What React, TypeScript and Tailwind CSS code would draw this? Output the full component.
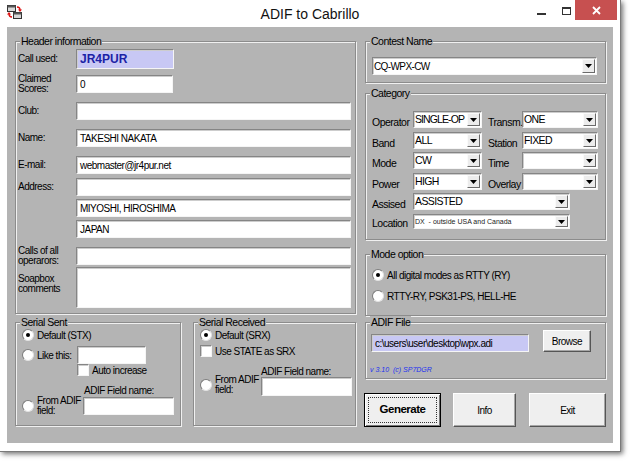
import React from "react";

const sunken =
  "border border-t-[#858585] border-l-[#858585] border-r-[#f5f5f5] border-b-[#f5f5f5] shadow-[inset_1px_1px_0_#cdcdcd]";

const raised =
  "bg-[#efefef] border border-t-white border-l-white border-r-[#555] border-b-[#555] shadow-[inset_-1px_-1px_0_#a6a6a6]";

function Input({
  className = "",
  value = "",
  bg = "bg-white",
  textClass = "",
}: {
  className?: string;
  value?: string;
  bg?: string;
  textClass?: string;
}) {
  return (
    <div className={`${sunken} ${bg} flex items-center pl-[3px] overflow-hidden whitespace-nowrap shrink-0 ${className}`}>
      <span className={textClass}>{value}</span>
    </div>
  );
}

function Select({
  className = "",
  value = "",
  textClass = "tracking-[-0.6px]",
}: {
  className?: string;
  value?: string;
  textClass?: string;
}) {
  return (
    <div className={`${sunken} bg-white flex items-stretch shrink-0 ${className}`}>
      <div className={`flex-1 flex items-center pl-[1px] overflow-hidden whitespace-pre ${textClass}`}>{value}</div>
      <div className="w-[13px] m-[1px] bg-[#ececec] border border-t-[#fafafa] border-l-[#fafafa] border-r-[#6a6a6a] border-b-[#6a6a6a] flex items-center justify-center">
        <svg width="7" height="4" viewBox="0 0 7 4">
          <path d="M0 0h7L3.5 4z" fill="#000" />
        </svg>
      </div>
    </div>
  );
}

function Radio({ checked = false }: { checked?: boolean }) {
  return (
    <div className="w-[12px] h-[12px] shrink-0 rounded-full bg-white border border-t-[#7c7c7c] border-l-[#7c7c7c] border-r-[#e2e2e2] border-b-[#e2e2e2] flex items-center justify-center">
      {checked && <div className="w-[4px] h-[4px] rounded-full bg-black" />}
    </div>
  );
}

function Check() {
  return <div className={`w-[12px] h-[12px] shrink-0 bg-white ${sunken}`} />;
}

function Group({ title, className = "", children }: { title: string; className?: string; children?: React.ReactNode }) {
  return (
    <div className={`border border-[#8c8c8c] shadow-[inset_1px_1px_0_#f0f0f0,1px_1px_0_#f0f0f0] shrink-0 ${className}`}>
      <div className="-mt-[7px] ml-[4px] px-[1px] w-fit bg-[#b4b4b4] leading-[12px] text-[10.5px]">{title}</div>
      {children}
    </div>
  );
}

function HRow({
  label,
  children,
  className = "",
}: {
  label: React.ReactNode;
  children: React.ReactNode;
  className?: string;
}) {
  return (
    <div className={`flex items-center ${className}`}>
      <div className="w-[58px] h-[18px] shrink-0 flex flex-col justify-center leading-[10px]">{label}</div>
      {children}
    </div>
  );
}

function CatRow({ className = "", children }: { className?: string; children: React.ReactNode }) {
  return <div className={`flex items-end ${className}`}>{children}</div>;
}

function TitleIcon() {
  return (
    <svg width="15" height="14" viewBox="0 0 15 14">
      <rect x="0.5" y="0.5" width="8" height="6" fill="#d8d8d8" stroke="#333" />
      <rect x="0.5" y="0.5" width="8" height="2" fill="#555" />
      <rect x="6.5" y="7.5" width="8" height="6" fill="#d8d8d8" stroke="#333" />
      <rect x="6.5" y="7.5" width="8" height="2" fill="#555" />
      <path d="M10 2c2 0 3 1 3 3" stroke="#d11" strokeWidth="1.4" fill="none" />
      <path d="M11 4.5h4l-2 2.5z" fill="#d11" />
      <path d="M5 12c-2 0-3-1-3-3" stroke="#d11" strokeWidth="1.4" fill="none" />
      <path d="M0 9.5h4l-2-2.5z" fill="#d11" />
    </svg>
  );
}

export default function App() {
  return (
    <div className="w-[630px] h-[461px] bg-white font-['Liberation_Sans',Arial,sans-serif] text-[10px] tracking-[-0.5px] text-black">
      <div className="w-[621px] h-[452px] bg-white border-r border-b border-[#7a7a7a] shadow-[2px_2px_5px_rgba(0,0,0,0.55)]">
        {/* title bar */}
        <div className="h-[27px] grid grid-cols-[1fr_auto_1fr]">
          <div className="pl-[7px] pt-[5px]">
            <TitleIcon />
          </div>
          <div className="pt-[5px] text-[14px] leading-[18px] tracking-normal text-[#111]">ADIF to Cabrillo</div>
          <div className="flex justify-end items-start pr-[3px]">
            <div className="mt-[13px] w-[9px] h-[2px] bg-[#333]" />
            <div className="ml-[16px] mt-[7px] w-[9px] h-[8px] border border-[#333] border-t-2" />
            <div className="ml-[4px] w-[42px] h-[20px] bg-[#c75050] flex items-center justify-center">
              <svg width="9" height="9" viewBox="0 0 9 9">
                <path d="M1 1l7 7M8 1l-7 7" stroke="#fff" strokeWidth="1.8" />
              </svg>
            </div>
          </div>
        </div>

        {/* client area */}
        <div className="ml-[7px] w-[606px] h-[416px] bg-[#b4b4b4] flex pl-[8px] pt-[14px] gap-[9px]">
          {/* left column */}
          <div className="w-[341px] flex flex-col">
            <Group title="Header information" className="h-[273px]">
              <div className="flex flex-col pl-[2px] pt-[2px]">
                <HRow label="Call used:">
                  <Input
                    className="w-[98px] h-[20px]"
                    bg="bg-[#c8c8f4]"
                    value="JR4PUR"
                    textClass="font-bold text-[12px] tracking-normal text-[#1c22a6]"
                  />
                </HRow>
                <HRow label={<>Claimed<br />Scores:</>} className="mt-[6px]">
                  <Input className="w-[97px] h-[18px]" value="0" />
                </HRow>
                <HRow label="Club:" className="mt-[9px]">
                  <Input className="w-[275px] h-[18px]" />
                </HRow>
                <HRow label="Name:" className="mt-[9px]">
                  <Input className="w-[275px] h-[18px]" value="TAKESHI NAKATA" />
                </HRow>
                <HRow label="E-mail:" className="mt-[9px]">
                  <Input className="w-[275px] h-[18px]" value="webmaster@jr4pur.net" />
                </HRow>
                <HRow label="Address:" className="mt-[4px]">
                  <Input className="w-[275px] h-[18px]" />
                </HRow>
                <HRow label="" className="mt-[3px]">
                  <Input className="w-[275px] h-[18px]" value="MIYOSHI, HIROSHIMA" />
                </HRow>
                <HRow label="" className="mt-[3px]">
                  <Input className="w-[275px] h-[18px]" value="JAPAN" />
                </HRow>
                <HRow label={<>Calls of all<br />operarors:</>} className="mt-[9px]">
                  <Input className="w-[275px] h-[18px]" />
                </HRow>
                <div className="flex mt-[2px]">
                  <div className="w-[58px] shrink-0 leading-[10px] mt-[7px]">
                    Soapbox
                    <br />
                    comments
                  </div>
                  <Input className="w-[275px] h-[41px]" />
                </div>
              </div>
            </Group>

            <div className="flex mt-[8px] gap-[12px]">
              <Group title="Serial Sent" className="w-[166px] h-[104px]">
                <div className="flex flex-col pl-[6px]">
                  <div className="flex items-center gap-[3px] mt-[1px] h-[12px]">
                    <Radio checked />
                    <span>Default (STX)</span>
                  </div>
                  <div className="flex items-center mt-[5px]">
                    <Radio />
                    <span className="ml-[3px] w-[40px] whitespace-nowrap">Like this:</span>
                    <Input className="w-[69px] h-[18px]" />
                  </div>
                  <div className="flex items-center gap-[3px] ml-[55px] h-[12px]">
                    <Check />
                    <span>Auto increase</span>
                  </div>
                  <div className="flex mt-[9px]">
                    <div className="w-[61px] h-[18px] self-end flex items-center gap-[3px]">
                      <Radio />
                      <span className="leading-[10px] whitespace-nowrap">
                        From ADIF
                        <br />
                        field:
                      </span>
                    </div>
                    <div className="flex flex-col">
                      <span className="pl-[1px] leading-[12px]">ADIF Field name:</span>
                      <Input className="w-[91px] h-[18px]" />
                    </div>
                  </div>
                </div>
              </Group>

              <Group title="Serial Received" className="w-[163px] h-[104px]">
                <div className="flex flex-col pl-[6px]">
                  <div className="flex items-center gap-[3px] mt-[1px] h-[12px]">
                    <Radio checked />
                    <span>Default (SRX)</span>
                  </div>
                  <div className="flex items-center gap-[3px] mt-[4px] h-[12px]">
                    <Check />
                    <span>Use STATE as SRX</span>
                  </div>
                  <div className="flex mt-[9px]">
                    <div className="w-[61px] h-[19px] mb-[2px] self-end flex items-center gap-[3px]">
                      <Radio />
                      <span className="leading-[10px] whitespace-nowrap">
                        From ADIF
                        <br />
                        field:
                      </span>
                    </div>
                    <div className="flex flex-col">
                      <span className="leading-[11px]">ADIF Field name:</span>
                      <Input className="w-[91px] h-[19px]" />
                    </div>
                  </div>
                </div>
              </Group>
            </div>
          </div>

          {/* right column */}
          <div className="w-[241px] flex flex-col">
            <Group title="Contest Name" className="h-[42px]">
              <div className="pl-[6px] pt-[10px]">
                <Select className="w-[225px] h-[18px]" value="CQ-WPX-CW" />
              </div>
            </Group>

            <Group title="Category" className="h-[147px] mt-[10px]">
              <div className="flex flex-col pl-[6px] leading-[11px] text-[10.5px]">
                <CatRow className="mt-[12px]">
                  <span className="w-[41px]">Operator</span>
                  <Select className="w-[69px] h-[17px]" value="SINGLE-OP" textClass="tracking-[-0.9px]" />
                  <span className="ml-[6px] w-[34px]">Transm.</span>
                  <Select className="w-[76px] h-[17px]" value="ONE" />
                </CatRow>
                <CatRow className="mt-[4px]">
                  <span className="w-[41px]">Band</span>
                  <Select className="w-[69px] h-[17px]" value="ALL" />
                  <span className="ml-[6px] w-[34px]">Station</span>
                  <Select className="w-[76px] h-[17px]" value="FIXED" />
                </CatRow>
                <CatRow className="mt-[3px]">
                  <span className="w-[41px]">Mode</span>
                  <Select className="w-[69px] h-[17px]" value="CW" />
                  <span className="ml-[6px] w-[34px]">Time</span>
                  <Select className="w-[76px] h-[17px]" value="" />
                </CatRow>
                <CatRow className="mt-[4px]">
                  <span className="w-[41px]">Power</span>
                  <Select className="w-[69px] h-[17px]" value="HIGH" />
                  <span className="ml-[6px] w-[34px]">Overlay</span>
                  <Select className="w-[76px] h-[17px]" value="" />
                </CatRow>
                <CatRow className="mt-[3px]">
                  <span className="w-[41px]">Assised</span>
                  <Select className="w-[157px] h-[17px]" value="ASSISTED" />
                </CatRow>
                <CatRow className="mt-[4px]">
                  <span className="w-[41px]">Location</span>
                  <Select
                    className="w-[157px] h-[15px]"
                    value="DX  - outside USA and Canada"
                    textClass="text-[7px] tracking-normal text-[#222]"
                  />
                </CatRow>
              </div>
            </Group>

            <Group title="Mode option" className="h-[62px] mt-[14px]">
              <div className="flex flex-col pl-[6px] pt-[8px] gap-[7px]">
                <div className="flex items-center h-[14px] gap-[3px]">
                  <Radio checked />
                  <span>All digital modes as RTTY (RY)</span>
                </div>
                <div className="flex items-center h-[14px] gap-[3px]">
                  <Radio />
                  <span>RTTY-RY, PSK31-PS, HELL-HE</span>
                </div>
              </div>
            </Group>

            <Group title="ADIF File" className="h-[57px] mt-[6px]">
              <div className="flex items-end pl-[5px] pt-[2px] gap-[14px]">
                <Input className="w-[158px] h-[18px]" bg="bg-[#c8c8f4]" value="c:\users\user\desktop\wpx.adi" />
                <div className={`${raised} w-[48px] h-[22px] flex items-center justify-center`}>Browse</div>
              </div>
              <div className="pl-[4px] mt-[14px] text-[7px] italic leading-[8px] tracking-normal text-[#2231f0] whitespace-pre">
                v 3.10  (c) SP7DGR
              </div>
            </Group>

            <div className="flex mt-[14px] -ml-[1px]">
              <div className="w-[77px] h-[34px] bg-[#efefef] border border-black shadow-[inset_1px_1px_0_#fff,inset_-1px_-1px_0_#777] p-[3px]">
                <div className="w-full h-full border border-dotted border-[#333] flex items-center justify-center font-bold text-[11.5px]">
                  Generate
                </div>
              </div>
              <div className={`${raised} ml-[12px] w-[63px] h-[34px] flex items-center justify-center`}>Info</div>
              <div className={`${raised} ml-[13px] w-[77px] h-[34px] flex items-center justify-center`}>Exit</div>
            </div>
          </div>
        </div>
      </div>
    </div>
  );
}
